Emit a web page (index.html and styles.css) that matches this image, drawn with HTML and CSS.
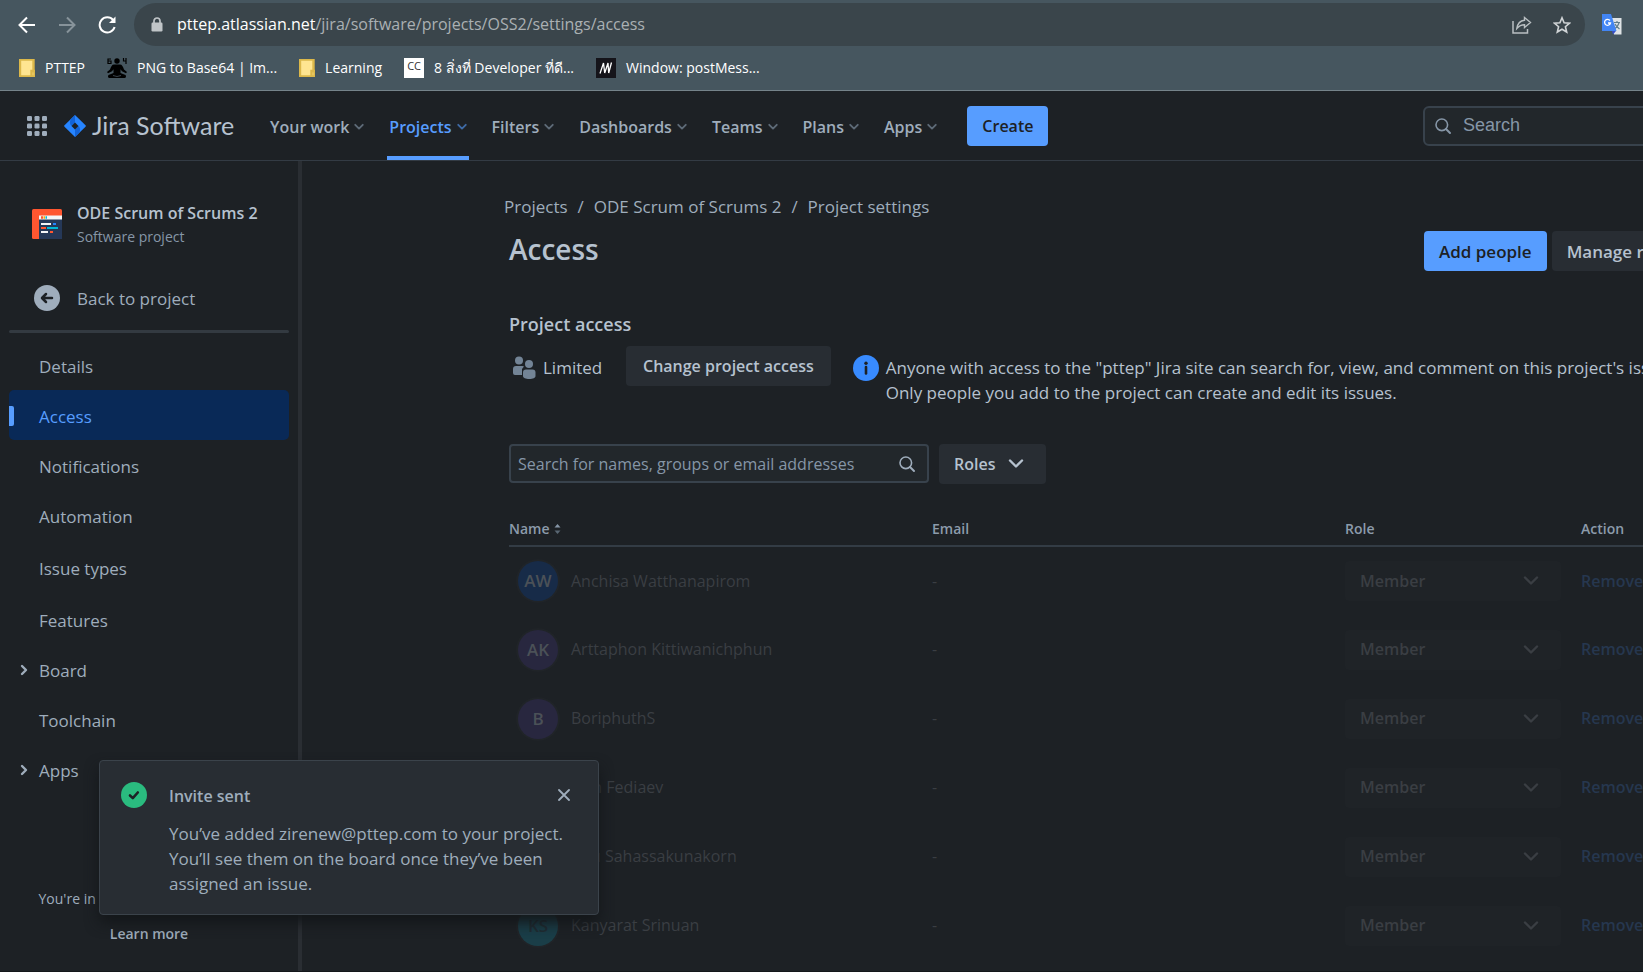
FILE: index.html
```html
<!DOCTYPE html>
<html lang="en">
<head>
<meta charset="utf-8">
<title>Access - ODE Scrum of Scrums 2 - Jira</title>
<link rel="stylesheet" href="styles.css">
</head>
<body>
<svg class="defs" aria-hidden="true">
  <symbol id="chev" viewBox="0 0 16 12"><path d="M2 2.500l6 6 6-6" fill="none" stroke="currentColor" stroke-linecap="round" stroke-linejoin="round"/></symbol>
  <symbol id="chev-right" viewBox="0 0 8 12"><path d="M2 2l4 4-4 4" fill="none" stroke="currentColor" stroke-width="2.400" stroke-linejoin="round" stroke-linecap="round"/></symbol>
  <symbol id="magnifier" viewBox="0 0 16 16"><circle cx="6.800" cy="6.800" r="5.800" fill="none" stroke="currentColor" stroke-width="1.600"/><path d="M11 11l4 4" stroke="currentColor" stroke-width="1.900" stroke-linecap="round"/></symbol>
  <symbol id="folder" viewBox="0 0 16 18"><path d="M1 .5h13.500V12h1v5.500H1z" fill="#ffe591" stroke="#dcb84a"/><path d="M14.500 12h-2v5.500" fill="none" stroke="#dcb84a"/></symbol>
</svg>

<header class="chrome">
  <div class="toolbar">
    <button class="tool" aria-label="Back"><svg width="18" height="18" viewBox="0 0 18 18"><path d="M17 9H2M9 1.500L1.500 9 9 16.500" fill="none" stroke="#fff" stroke-width="2"/></svg></button>
    <button class="tool" aria-label="Forward"><svg width="18" height="18" viewBox="0 0 18 18"><path d="M1 9h15M9 1.500L16.500 9 9 16.500" fill="none" stroke="#87939a" stroke-width="2"/></svg></button>
    <button class="tool" aria-label="Reload"><svg width="18" height="18" viewBox="0 0 18 18"><path d="M15.200 4.200A7.600 7.600 0 1 0 16.600 11" fill="none" stroke="#fff" stroke-width="2"/><path d="M17.500.5v6.500h-6.500z" fill="#fff"/></svg></button>
    <div class="omnibox">
      <svg width="12" height="16" viewBox="0 0 12 16"><path d="M3 6V4a3 3 0 0 1 6 0v2" fill="none" stroke="#c0c5c8" stroke-width="1.700"/><rect x=".5" y="5.500" width="11" height="9" rx="1.200" fill="#c0c5c8"/></svg>
      <span class="url"><span class="host">pttep.atlassian.net</span>/jira/software/projects/OSS2/settings/access</span>
      <button class="tool" aria-label="Share"><svg width="20" height="18" viewBox="0 0 20 18"><path d="M1 5v12h14.500v-4" fill="none" stroke="#b9bfc2" stroke-width="1.500"/><path d="M12.500 1.500l6 5-6 5V8.800C9 8.800 7 10 4.800 12.500 5.500 8 8 4.800 12.500 4.300z" fill="none" stroke="#b9bfc2" stroke-width="1.400"/></svg></button>
      <button class="tool star" aria-label="Bookmark"><svg width="18" height="18" viewBox="0 0 18 18"><path d="M9 1.800l2.100 5 5.400.4-4.100 3.500 1.300 5.300L9 13.200 4.300 16l1.300-5.300-4.100-3.500 5.400-.4z" fill="none" stroke="#d0d4d6" stroke-width="1.600"/></svg></button>
    </div>
    <button class="tool translate" aria-label="Translate"><svg width="22" height="22" viewBox="0 0 22 22"><path d="M8 4h12.500v16.500H13z" fill="#dfe3e6"/><path d="M13 8.500h6M16 7v2M18 9c-1 3.500-3 5-4.500 6M14 10c1 2 2.500 3.500 4.500 5" fill="none" stroke="#607d8b" stroke-width="1.200"/><path d="M11 17h4l-3 3.500z" fill="#3a50c8"/><path d="M1 0h9l5.500 17H1z" fill="#4285f4"/><path d="M9 6.500A3 3 0 1 0 9.500 9H7" fill="none" stroke="#fff" stroke-width="1.300"/></svg></button>
  </div>
  <nav class="bookmarks" aria-label="Bookmarks">
    <a href="#"><svg width="16" height="18"><use href="#folder"/></svg>PTTEP</a>
    <a href="#"><svg width="20" height="20" viewBox="0 0 20 20"><path d="M4 1H1v4.500h3V3H1M16.500 0v3H19M19 0v6" fill="none" stroke="#000" stroke-width="1.200"/><circle cx="10" cy="3" r="2.700"/><path d="M7 6.500h6c2 0 3 2 4 5l3 2.500-1 1.200-4-2-1.500-2V15l5 2c1 1 .5 3-1 3H2.500C1 20 .5 18 1.500 17l5-2v-3.800l-1.500 2-4 2-1-1.200 3-2.500c1-3 2-5 4-5z"/><path d="M6 17.500l4 1 4-1" fill="none" stroke="#46565f" stroke-width=".8"/></svg>PNG to Base64 | Im...</a>
    <a href="#"><svg width="16" height="18"><use href="#folder"/></svg>Learning</a>
    <a href="#"><span class="fav cc">CC</span>8 สิ่งที่ Developer ที่ดี...</a>
    <a href="#"><span class="fav mdn"><svg width="14" height="12" viewBox="0 0 14 12"><path d="M1 11.500L4.500 1l1.200 10L9 1l.7 10L12.500.5" fill="none" stroke="#fff" stroke-width="1.300"/></svg></span>Window: postMess...</a>
  </nav>
</header>

<header class="topnav">
  <button class="switcher" aria-label="App switcher"><svg width="20" height="20" viewBox="0 0 20 20" fill="#9fadbc"><rect width="5" height="5" rx="1.200"/><rect x="7.500" width="5" height="5" rx="1.200"/><rect x="15" width="5" height="5" rx="1.200"/><rect y="7.500" width="5" height="5" rx="1.200"/><rect x="7.500" y="7.500" width="5" height="5" rx="1.200"/><rect x="15" y="7.500" width="5" height="5" rx="1.200"/><rect y="15" width="5" height="5" rx="1.200"/><rect x="7.500" y="15" width="5" height="5" rx="1.200"/><rect x="15" y="15" width="5" height="5" rx="1.200"/></svg></button>
  <a class="brand" href="#"><svg width="22" height="22" viewBox="0 0 22 22"><path d="M11 0l10.500 10.300a1 1 0 0 1 0 1.400L11 22 .5 11.700a1 1 0 0 1 0-1.400z" fill="#2684ff"/><path d="M11 0v7.500L7.500 11C5.500 9 5.500 6.500 7 4z" fill="#1263d8"/><path d="M11 22v-7.500l3.500-3.500c2 2 2 4.500.5 7z" fill="#1263d8"/><path d="M11 7.500l3.500 3.500-3.500 3.500L7.500 11z" fill="#1d2125"/></svg><span>Jira Software</span></a>
  <nav class="menu" aria-label="Main">
    <button>Your work<svg><use href="#chev"/></svg></button>
    <button class="current">Projects<svg><use href="#chev"/></svg></button>
    <button>Filters<svg><use href="#chev"/></svg></button>
    <button>Dashboards<svg><use href="#chev"/></svg></button>
    <button>Teams<svg><use href="#chev"/></svg></button>
    <button>Plans<svg><use href="#chev"/></svg></button>
    <button>Apps<svg><use href="#chev"/></svg></button>
  </nav>
  <button class="btn primary create">Create</button>
  <label class="top-search"><svg width="16" height="16"><use href="#magnifier"/></svg><input type="search" placeholder="Search" aria-label="Search"></label>
</header>

<div class="app">
  <aside class="sidebar">
    <div class="project">
      <svg width="30" height="30" viewBox="0 0 30 30"><rect width="30" height="30" rx="1.500" fill="#ff5630"/><path d="M7 7h23v23H7z" fill="#253858"/><path d="M7 6.500h23v4H7z" fill="#f4f5f7"/><path d="M9 8.500h2" stroke="#ff5630"/><path d="M11.500 8.500h1.500" stroke="#ffab00"/><path d="M13.500 8.500h1.500" stroke="#00b8d9"/><g stroke-width="2"><path d="M9 15h10M9 23h7" stroke="#f4f5f7"/><path d="M21 15h3" stroke="#2684ff"/><path d="M9 19h5" stroke="#ff5630"/><path d="M15 19h11" stroke="#00b8d9"/><path d="M18 23h3" stroke="#ff5630"/></g></svg>
      <div><div class="project-name">ODE Scrum of Scrums 2</div><div class="project-type">Software project</div></div>
    </div>
    <a class="back" href="#"><svg width="26" height="26" viewBox="0 0 26 26"><circle cx="13" cy="13" r="13" fill="#9fadbc"/><path d="M18 13H8.500M12 9l-4 4 4 4" fill="none" stroke="#1d2125" stroke-width="2.500" stroke-linecap="round" stroke-linejoin="round"/></svg>Back to project</a>
    <hr>
    <nav class="side-nav" aria-label="Project settings">
      <a href="#">Details</a>
      <a href="#" class="selected" aria-current="page">Access</a>
      <a href="#">Notifications</a>
      <a href="#">Automation</a>
      <a href="#" class="section">Issue types</a>
      <a href="#" class="section">Features</a>
      <a href="#"><svg width="8" height="12"><use href="#chev-right"/></svg>Board</a>
      <a href="#">Toolchain</a>
      <a href="#"><svg width="8" height="12"><use href="#chev-right"/></svg>Apps</a>
    </nav>
    <footer class="side-foot"><p>You're in a team-managed project</p><a href="#">Learn more</a></footer>
  </aside>

  <main class="main">
    <div class="content">
      <nav class="crumbs" aria-label="Breadcrumb"><a href="#">Projects</a><span>/</span><a href="#">ODE Scrum of Scrums 2</a><span>/</span><a href="#">Project settings</a></nav>
      <div class="title-row">
        <h1>Access</h1>
        <button class="btn primary">Add people</button>
        <button class="btn">Manage roles</button>
      </div>
      <h2>Project access</h2>
      <div class="access-row">
        <div class="level"><svg width="24" height="24" viewBox="0 0 24 24" fill="#738496"><circle cx="7" cy="4.500" r="4"/><path d="M4 10h6.500a3 3 0 0 1 1.500.5L10 13v6H3a2 2 0 0 1-2-2v-4a3 3 0 0 1 3-3z"/><circle cx="17" cy="8" r="4"/><path d="M14 13.500h6.500a3 3 0 0 1 3 3V20c0 2-2.500 3-6.200 3S11 22 11 20v-3.500a3 3 0 0 1 3-3z"/></svg>Limited</div>
        <button class="btn change">Change project access</button>
        <div class="info"><svg width="26" height="26" viewBox="0 0 26 26"><circle cx="13" cy="13" r="13" fill="#388bff"/><circle cx="13" cy="8.200" r="1.700" fill="#1d2125"/><path d="M13 12v6.500" stroke="#1d2125" stroke-width="2.600" stroke-linecap="round"/></svg><p>Anyone with access to the "pttep" Jira site can search for, view, and comment on this project's issues.<br>Only people you add to the project can create and edit its issues.</p></div>
      </div>
      <div class="filters">
        <label class="people-search"><input type="text" placeholder="Search for names, groups or email addresses" aria-label="Search people"><svg width="16" height="16"><use href="#magnifier"/></svg></label>
        <button class="btn roles">Roles<svg width="16" height="12"><use href="#chev"/></svg></button>
      </div>
      <table class="people">
        <colgroup><col class="c-name"><col class="c-email"><col class="c-role"><col></colgroup>
        <thead><tr><th>Name<svg class="sort" width="7" height="10" viewBox="0 0 7 10"><path d="M.5 3.500L3.500 0l3 3.500z" fill="#8696a7"/><path d="M.5 6.500l3 3.500 3-3.500z" fill="#596773"/></svg></th><th>Email</th><th>Role</th><th>Action</th></tr></thead>
        <tbody>
          <tr><td><div class="person"><span class="avatar blue">AW</span>Anchisa Watthanapirom</div></td><td>-</td><td><div class="pick"><select aria-label="Role"><option>Member</option></select><svg width="16" height="12"><use href="#chev"/></svg></div></td><td><button class="remove">Remove</button></td></tr>
          <tr><td><div class="person"><span class="avatar purple">AK</span>Arttaphon Kittiwanichphun</div></td><td>-</td><td><div class="pick"><select aria-label="Role"><option>Member</option></select><svg width="16" height="12"><use href="#chev"/></svg></div></td><td><button class="remove">Remove</button></td></tr>
          <tr><td><div class="person"><span class="avatar purple">B</span>BoriphuthS</div></td><td>-</td><td><div class="pick"><select aria-label="Role"><option>Member</option></select><svg width="16" height="12"><use href="#chev"/></svg></div></td><td><button class="remove">Remove</button></td></tr>
          <tr><td><div class="person"><span class="avatar blue">IF</span>Ivan Fediaev</div></td><td>-</td><td><div class="pick"><select aria-label="Role"><option>Member</option></select><svg width="16" height="12"><use href="#chev"/></svg></div></td><td><button class="remove">Remove</button></td></tr>
          <tr><td><div class="person"><span class="avatar purple">AS</span>Anu Sahassakunakorn</div></td><td>-</td><td><div class="pick"><select aria-label="Role"><option>Member</option></select><svg width="16" height="12"><use href="#chev"/></svg></div></td><td><button class="remove">Remove</button></td></tr>
          <tr><td><div class="person"><span class="avatar teal">KS</span>Kanyarat Srinuan</div></td><td>-</td><td><div class="pick"><select aria-label="Role"><option>Member</option></select><svg width="16" height="12"><use href="#chev"/></svg></div></td><td><button class="remove">Remove</button></td></tr>
        </tbody>
      </table>
    </div>
  </main>
</div>

<section class="toast" role="alert">
  <svg width="26" height="26" viewBox="0 0 26 26"><circle cx="13" cy="13" r="13" fill="#2abb7f"/><path d="M9 13.500l2.800 2.600 5-5.600" fill="none" stroke="#1d2125" stroke-width="2.600" stroke-linecap="round" stroke-linejoin="round"/></svg>
  <div class="toast-text"><h3>Invite sent</h3><p>You’ve added zirenew@pttep.com to your project. You’ll see them on the board once they’ve been assigned an issue.</p></div>
  <button class="tool" aria-label="Dismiss"><svg width="12" height="12" viewBox="0 0 12 12"><path d="M1 1l10 10M11 1L1 11" stroke="#9fadbc" stroke-width="1.800" stroke-linecap="round"/></svg></button>
</section>
</body>
</html>
```
FILE: styles.css
```css
* { box-sizing: border-box; }
body {
  margin: 0;
  height: 100vh;
  display: flex;
  flex-direction: column;
  overflow: hidden;
  background: #1d2125;
  color: #9fadbc;
  font: 16px/25px "Open Sans", "Noto Sans", sans-serif;
}
button, input, select { font: inherit; color: inherit; }
button { border: 0; background: none; padding: 0; white-space: nowrap; }
a { color: inherit; text-decoration: none; }
h1, h2, h3, p { margin: 0; font-weight: 600; }
p { font-weight: 400; }
svg { display: block; flex: none; stroke-width: 2.4px; }
.defs { position: absolute; width: 0; height: 0; }

.chrome { flex: none; background: #46565f; border-bottom: 1px solid #75838a; height: 91px; }
.toolbar { display: flex; align-items: center; gap: 22px; height: 49px; padding: 0 20px 0 18px; }
.tool { display: flex; align-items: center; }
.omnibox { flex: 1; display: flex; align-items: center; height: 43px; margin-left: -4px; padding: 0 14px 0 17px; border-radius: 22px; background: #3a454b; }
.url { flex: 1; margin-left: 14px; color: #aab0b3; }
.host { color: #fff; }
.star { margin-left: 21px; }
.translate { margin-left: -6px; }
.bookmarks { display: flex; align-items: center; gap: 22px; height: 37px; padding-left: 19px; color: #fff; font-size: 14px; white-space: nowrap; }
.bookmarks a { display: flex; align-items: center; gap: 10px; }
.fav { width: 20px; height: 20px; display: flex; align-items: center; justify-content: center; background: #fff; color: #333; }
.cc { padding-bottom: 4px; font-size: 11px; line-height: 16px; }
.mdn { background: #15141a; }

.topnav { flex: none; display: flex; align-items: center; height: 70px; padding-left: 27px; border-bottom: 1px solid #333b44; overflow: hidden; }
.brand { display: flex; align-items: center; gap: 6px; margin-left: 17px; color: #b6c2cf; font: 25px/28px Lato, sans-serif; width: 204px; white-space: nowrap; }
.brand span { padding-bottom: 2px; }
.menu { display: flex; align-self: stretch; gap: 21px; }
.menu button { display: flex; align-items: center; gap: 5px; padding: 7px 2px 0; border-bottom: 4px solid transparent; font-weight: 600; }
.menu svg { width: 10px; height: 8px; color: #5d6a77; stroke-width: 3px; }
.menu .current { color: #579dff; border-bottom-color: #579dff; }
.menu .current svg { color: #3e6aa5; }
.btn { height: 40px; padding: 0 15px; border-radius: 4px; background: #282d33; color: #b6c2cf; font-weight: 600; }
.primary { background: #579dff; color: #1d2125; }
.create { margin-left: 28px; padding-top: 2px; }
.top-search { display: flex; align-items: center; gap: 12px; width: 260px; height: 40px; margin: 0 -40px 0 auto; padding: 0 10px; border: 2px solid #38424c; border-radius: 6px; background: #22272b; color: #8696a7; }
.top-search input { width: 100%; border: 0; padding: 0; background: none; font-family: "Liberation Sans", sans-serif; font-size: 18px; }
input::placeholder { color: #8696a7; opacity: 1; }

.app { flex: 1; display: flex; min-height: 0; border-bottom: 1px solid #14171a; }
.sidebar { flex: none; width: 302px; padding: 38px 9px 0; border-right: 4px solid #2a2e33; white-space: nowrap; }
.project { display: flex; align-items: center; gap: 15px; height: 50px; padding-left: 23px; }
.project-name { font-weight: 600; line-height: 26px; color: #b6c2cf; }
.project-type { font-size: 14px; line-height: 22px; color: #8696a7; }
.back { display: flex; align-items: center; gap: 17px; height: 50px; margin-top: 24px; padding-left: 25px; font-size: 17px; }
.sidebar hr { height: 3px; margin: 7px 0; border: 0; border-radius: 2px; background: #333a41; }
.side-nav a { display: flex; align-items: center; height: 50px; padding: 2px 0 0 30px; border-radius: 5px; font-size: 17px; }
.side-nav a svg { margin: 0 11px 0 -19px; }
.side-nav .section { margin-top: 2px; }
.side-nav .selected { padding-left: 0; background: #092957; color: #579dff; }
.side-nav .selected::before { content: ""; width: 5px; height: 20px; margin-right: 25px; border-radius: 0 2px 2px 0; background: #579dff; }
.side-foot { margin-top: 92px; text-align: center; font-size: 14px; }
.side-foot a { display: block; margin-top: 10px; font-weight: 600; }

.main { flex: 1; min-width: 0; overflow: hidden; padding: 33px 0 0 207px; }
.content { margin-right: -49px; }
.crumbs { display: flex; gap: 10px; margin-left: -5px; font-size: 17px; }
.title-row { display: flex; align-items: center; gap: 5px; height: 40px; margin-top: 12px; font-size: 17px; }
h1 { flex: 1; padding-bottom: 4px; font-size: 28px; line-height: 32px; color: #b6c2cf; }
h2 { margin-top: 41px; font-size: 18px; color: #b6c2cf; }
.access-row { display: flex; align-items: flex-start; margin-top: 9px; color: #b6c2cf; white-space: nowrap; }
.level { display: flex; align-items: center; gap: 7px; width: 117px; padding: 9px 0 0 3px; font-size: 17px; }
.change { padding: 0 17px; }
.info { display: flex; gap: 7px; margin: 9px 0 0 22px; font-size: 17px; }
.filters { display: flex; gap: 10px; margin-top: 39px; }
.people-search { display: flex; align-items: center; width: 420px; height: 39px; padding: 0 12px 0 7px; border: 2px solid #38424c; border-radius: 4px; background: #22272b; }
.people-search input { flex: 1; min-width: 0; border: 0; padding: 2px 0 0; background: none; }
.roles { display: flex; align-items: center; gap: 13px; padding-right: 22px; }
.people { width: 100%; margin-top: 30px; border-collapse: collapse; table-layout: fixed; }
.c-name { width: 423px; }
.c-email { width: 413px; }
.c-role { width: 236px; }
.people th { height: 32px; padding: 0 0 2px; border-bottom: 2px solid #333c45; text-align: left; font-size: 14px; font-weight: 600; color: #8c9bab; }
.sort { display: inline-block; margin-left: 4px; }
.people td { height: 69px; padding: 0; color: #3a3e43; }
.person { display: flex; align-items: center; gap: 13px; padding-left: 9px; }
.avatar { width: 40px; height: 40px; border-radius: 50%; text-align: center; font-size: 17px; line-height: 40px; font-weight: 600; color: #4b5157; box-shadow: 0 0 0 2px #202428; }
.blue { background: #172b48; }
.purple { background: #28273f; }
.teal { background: #1a3e48; color: #1f2c33; }
.pick { display: grid; align-items: center; width: 216px; }
.pick select, .pick svg { grid-area: 1 / 1; }
.pick select { appearance: none; width: 100%; height: 40px; padding: 0 15px; border: 0; border-radius: 4px; background: #1f2327; font-weight: 600; }
.pick svg { justify-self: end; margin-right: 22px; pointer-events: none; }
.remove { color: #26374f; font-weight: 600; }

.toast { position: absolute; left: 99px; bottom: 57px; display: flex; align-items: flex-start; width: 500px; height: 155px; padding: 21px 28px 0 21px; border: 1px solid #3b434b; border-radius: 4px; background: #282d33; box-shadow: 0 8px 14px #14171a; }
.toast-text { flex: 1; min-width: 0; margin-left: 22px; }
.toast-text h3 { margin: 1px 0 11px; font-size: 16px; line-height: 27px; }
.toast-text p { width: 400px; font-size: 17px; }
.toast .tool { height: 26px; }
```
